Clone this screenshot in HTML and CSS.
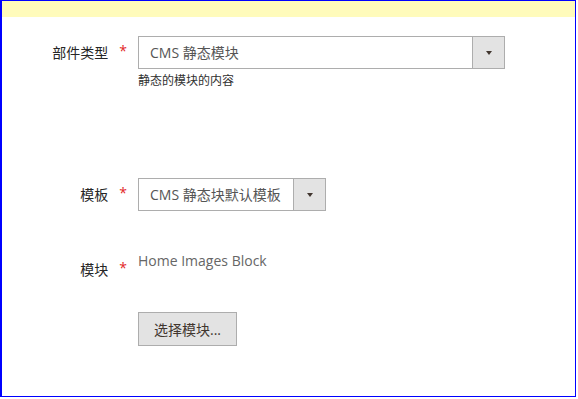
FILE: index.html
```html
<!doctype html>
<html lang="zh-CN">
<head>
    <meta charset="utf-8">
    <title>部件选项</title>
    <link rel="stylesheet" href="styles.css">
</head>
<body>
    <div class="frame">
        <div class="notice"></div>
        <form class="widget-form">
            <div class="field field-type">
                <label class="field-label" for="widget-type">部件类型<span class="required">*</span></label>
                <div class="field-control">
                    <div class="select-box select-wide">
                        <select id="widget-type" name="widget-type">
                            <option>CMS 静态模块</option>
                        </select>
                        <span class="select-btn"><span class="arrow"></span></span>
                    </div>
                    <div class="field-note">静态的模块的内容</div>
                </div>
            </div>

            <div class="field field-template">
                <label class="field-label" for="widget-template">模板<span class="required">*</span></label>
                <div class="field-control">
                    <div class="select-box select-narrow">
                        <select id="widget-template" name="widget-template">
                            <option>CMS 静态块默认模板</option>
                        </select>
                        <span class="select-btn"><span class="arrow"></span></span>
                    </div>
                </div>
            </div>

            <div class="field field-block">
                <label class="field-label">模块<span class="required">*</span></label>
                <div class="field-control">
                    <div class="field-value">Home Images Block</div>
                    <button type="button" class="btn">选择模块...</button>
                </div>
            </div>
        </form>
    </div>
</body>
</html>
```

FILE: styles.css
```css
/* General styling */
body {
    margin: 0;
    background: #ffffff;
    font-family: 'Open Sans', 'Noto Sans CJK SC', sans-serif;
    color: #303030;
}

/* Outer frame */
.frame {
    box-sizing: border-box;
    width: 576px;
    height: 397px;
    border-style: solid;
    border-color: #0000ff;
    border-width: 1px 1px 1px 2px;
}

.notice {
    height: 16px;
    background-color: #fffbbb;
}

.widget-form {
    padding-top: 19px;
}

/* Field rows */
.field {
    display: flex;
    align-items: flex-start;
}

.field-label {
    box-sizing: border-box;
    width: 136px;
    padding-right: 11px;
    display: flex;
    justify-content: flex-end;
    font-size: 14px;
    line-height: 33px;
    color: #262626;
}

.required {
    color: #e22626;
    font-size: 14px;
    margin-left: 11px;
    position: relative;
    top: -2px;
}

.field-template {
    margin-top: 89px;
}

.field-block {
    margin-top: 39px;
}

.field-block .field-label {
    line-height: 20px;
    padding-top: 10px;
}

/* Select boxes */
.select-box {
    display: flex;
    box-sizing: border-box;
    height: 33px;
    border: 1px solid #adadad;
    background: #ffffff;
}

.select-wide {
    width: 367px;
}

.select-narrow {
    width: 188px;
}

.select-box select {
    flex: 1;
    min-width: 0;
    appearance: none;
    -webkit-appearance: none;
    border: none;
    background: transparent;
    padding: 0 0 0 11px;
    font-family: inherit;
    font-size: 14px;
    color: #555555;
    outline: none;
}

.select-btn {
    width: 31px;
    border-left: 1px solid #adadad;
    background-color: #e3e3e3;
    display: flex;
    align-items: center;
    justify-content: center;
}

.arrow {
    width: 0;
    height: 0;
    border-left: 3.5px solid transparent;
    border-right: 3.5px solid transparent;
    border-top: 4px solid #41362f;
}

.field-note {
    margin-top: 4px;
    font-size: 12px;
    line-height: 16px;
    color: #303030;
}

/* Block chooser */
.field-value {
    font-size: 14px;
    line-height: 19px;
    color: #666666;
    padding-top: 1px;
}

.btn {
    margin-top: 42px;
    box-sizing: border-box;
    height: 34px;
    padding: 0 15px;
    border: 1px solid #adadad;
    background-color: #e3e3e3;
    font-family: inherit;
    font-size: 14px;
    color: #41362f;
    cursor: pointer;
}
```
